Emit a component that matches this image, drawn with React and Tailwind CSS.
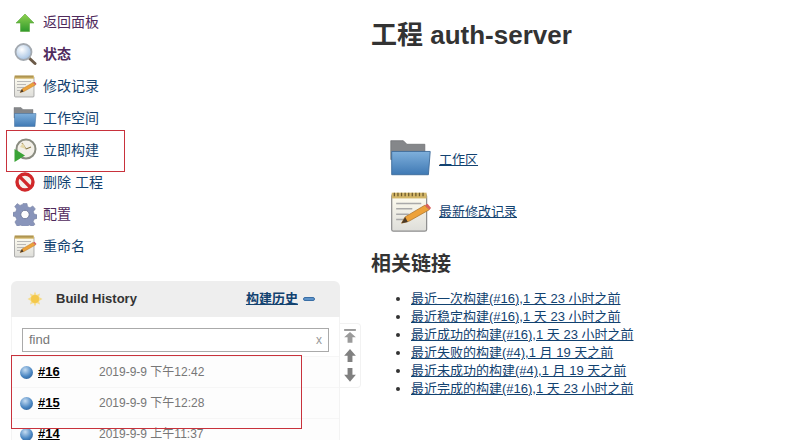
const FONT = "font-['Liberation_Sans','Noto_Sans_CJK_SC',sans-serif]";

function UpIcon() {
  return (
    <svg width="24" height="24" viewBox="0 0 24 24">
      <defs>
        <linearGradient id="upg" x1="0" y1="0" x2="0" y2="1">
          <stop offset="0" stopColor="#8fd14f" />
          <stop offset="1" stopColor="#2f9a2c" />
        </linearGradient>
      </defs>
      <path d="M12 4 L21 13 H16.500 V21.500 H7.500 V13 H3 Z" fill="url(#upg)" stroke="#5aa83a" strokeWidth="0.6" />
    </svg>
  );
}
function SearchIcon() {
  return (
    <svg width="24" height="24" viewBox="0 0 24 24">
      <defs>
        <radialGradient id="lens" cx="0.4" cy="0.35" r="0.7">
          <stop offset="0" stopColor="#ffffff" />
          <stop offset="1" stopColor="#9dbde0" />
        </radialGradient>
      </defs>
      <path d="M15 15 L22 21.500" stroke="#6b5a48" strokeWidth="3" strokeLinecap="round" />
      <circle cx="10.500" cy="10" r="8" fill="url(#lens)" stroke="#a3a9b0" strokeWidth="1.800" />
    </svg>
  );
}
function NotepadIcon({ s = 24, id }) {
  return (
    <svg width={s} height={s} viewBox="0 0 24 24">
      <defs>
        <linearGradient id={id} x1="0" y1="0" x2="0" y2="1">
          <stop offset="0" stopColor="#fffdf0" />
          <stop offset="1" stopColor="#dededa" />
        </linearGradient>
      </defs>
      <rect x="1.500" y="2.500" width="19.500" height="20.500" rx="1" fill={`url(#${id})`} stroke="#8f8f8f" strokeWidth="0.7" />
      <rect x="1.500" y="1.500" width="19.500" height="3.200" fill="#d3b668" />
      <path d="M3 1.500v2M5 1.500v2M7 1.500v2M9 1.500v2M11 1.500v2M13 1.500v2M15 1.500v2M17 1.500v2M19 1.500v2" stroke="#6c5a2d" strokeWidth="0.7" />
      <path d="M4 7.500h14M4 10.500h9M4 13.500h7M4 16.500h5" stroke="#a9a9a9" strokeWidth="0.8" />
      <path d="M7 18.500 L9 15 L20 8.500 L22.500 11 L11 17.500 Z" fill="#eda23a" stroke="#a86d22" strokeWidth="0.4" />
      <path d="M7 18.500 L9 15 L10.500 17.800 Z" fill="#4a3a28" />
      <path d="M20 8.500 L22.500 11 L23.500 10 L21.500 7.700 Z" fill="#d9605a" />
    </svg>
  );
}
function FolderIcon({ s = 24, id }) {
  return (
    <svg width={s} height={s} viewBox="0 0 24 24">
      <defs>
        <linearGradient id={id} x1="0" y1="0" x2="0" y2="1">
          <stop offset="0" stopColor="#7fb0dc" />
          <stop offset="1" stopColor="#3f79b4" />
        </linearGradient>
      </defs>
      <path d="M1 1.500 H8 L10 3.500 H20 V12 H1 Z" fill="#85878a" stroke="#6a6c6e" strokeWidth="0.4" />
      <path d="M1.500 20.500 L1.500 7.500 H23 L22 20.500 Z" fill={`url(#${id})`} stroke="#3c6a9a" strokeWidth="0.5" />
    </svg>
  );
}
function ClockIcon() {
  return (
    <svg width="24" height="24" viewBox="0 0 24 24">
      <circle cx="13" cy="11" r="9.500" fill="#f3f0e8" stroke="#8a8c80" strokeWidth="2" />
      <path d="M13 11 L9 5 M13 11 L18 9" stroke="#8a7a4a" strokeWidth="1.200" />
      <path d="M10 5 L13 11 L7 9 Z" fill="#e5d8a8" />
      <path d="M1.500 11 L12 17.500 L1.500 24 Z" fill="#3aa336" />
    </svg>
  );
}
function NoIcon() {
  return (
    <svg width="24" height="24" viewBox="0 0 24 24">
      <circle cx="12" cy="12" r="8" fill="#f5f1ec" stroke="#d1282a" strokeWidth="3.400" />
      <path d="M6.400 6.400 L17.600 17.600" stroke="#d1282a" strokeWidth="3.400" />
    </svg>
  );
}
function GearIcon() {
  return (
    <svg width="24" height="24" viewBox="0 0 24 24">
      <path d="M10 1.500h4l.6 3.200 2.400 1 2.800-1.800 2.600 3-2 2.500.7 2.600 3 .8v3.600l-3 .8-.9 2.500 1.800 2.600-2.800 2.600-2.600-1.800-2.400 1-.6 1.400h-3.400l-.6-1.400-2.500-1-2.600 1.800L1.900 20l1.800-2.600-1-2.500-2.700-.8v-3.600l2.800-.8.8-2.600-1.900-2.500 2.600-3 2.700 1.800 2.400-1z" fill="#8894ba" stroke="#737d9c" strokeWidth="0.5" />
      <circle cx="12" cy="12.500" r="4.200" fill="#fdfdfd" stroke="#5f6a8c" strokeWidth="0.8" />
    </svg>
  );
}
function SunIcon() {
  return (
    <svg width="16" height="16" viewBox="0 0 16 16">
      <path d="M8 .5 9.500 4 13 2.500 12 6l3.500 2-3.500 2 1 3.500L9.500 12 8 15.500 6.500 12 3 13.500 4 10 .5 8 4 6 3 2.500 6.500 4Z" fill="#f5dc8c" />
      <circle cx="8" cy="8" r="4" fill="#f4c84a" />
    </svg>
  );
}
function Ball() {
  return (
    <span className="block w-[13px] h-[13px] shrink-0 rounded-full bg-[radial-gradient(circle_at_40%_30%,#c5dcf2,#4a86c2_55%,#1f4f85)]" />
  );
}
function ArrowBtn({ kind }) {
  return (
    <svg width="12" height="14" viewBox="0 0 12 14">
      {kind === "first" && <rect x="0" y="0" width="12" height="2" fill="#9a9a9a" />}
      {kind === "down" ? (
        <path d="M3.500 0h5v7h3.500L6 14 0 7h3.500z" fill="#808080" />
      ) : (
        <path
          d={kind === "first" ? "M6 3l6 5.500H8.500V14h-5V8.500H0z" : "M6 0l6 7H8.500v7h-5V7H0z"}
          fill={kind === "first" ? "#9a9a9a" : "#808080"}
        />
      )}
    </svg>
  );
}

const side = [
  [<UpIcon />, "返回面板", "text-[#4f2a5c]", ""],
  [<SearchIcon />, "状态", "text-[#4f2a5c]", "font-bold"],
  [<NotepadIcon id="n1" />, "修改记录", "text-[#124270]", ""],
  [<FolderIcon id="f1" />, "工作空间", "text-[#124270]", ""],
  [<ClockIcon />, "立即构建", "text-[#124270]", ""],
  [<NoIcon />, "删除 工程", "text-[#124270]", ""],
  [<GearIcon />, "配置", "text-[#4f2a5c]", ""],
  [<NotepadIcon id="n2" />, "重命名", "text-[#124270]", ""],
];

const builds = [
  ["#16", "2019-9-9 下午12:42"],
  ["#15", "2019-9-9 下午12:28"],
  ["#14", "2019-9-9 上午11:37"],
];

const links = [
  "最近一次构建(#16),1 天 23 小时之前",
  "最近稳定构建(#16),1 天 23 小时之前",
  "最近成功的构建(#16),1 天 23 小时之前",
  "最近失败的构建(#4),1 月 19 天之前",
  "最近未成功的构建(#4),1 月 19 天之前",
  "最近完成的构建(#16),1 天 23 小时之前",
];

export default function App() {
  return (
    <div className={`relative flex w-[800px] h-[440px] overflow-hidden bg-white ${FONT}`}>
      <div className="w-[371px] shrink-0 pt-[6px]">
        <div className="flex flex-col pl-[13px]">
          {side.map(([icon, label, color, extra]) => (
            <div key={label} className="flex items-center h-8 gap-[6px]">
              <span className="w-6 h-6 shrink-0">{icon}</span>
              <span className={`text-[14px] leading-4 ${color} ${extra}`}>{label}</span>
            </div>
          ))}
        </div>
        <div className="flex items-start mt-[19px] ml-[11px]">
          <div className="w-[329px] shrink-0">
            <div className="flex items-center h-9 rounded-t-[6px] bg-[#eeeeee]">
              <span className="ml-[16px] w-4 h-4">
                <SunIcon />
              </span>
              <span className="ml-[13px] text-[13px] font-bold text-[#333333]">Build History</span>
              <span className="ml-[109px] text-[13px] font-bold text-[#124270] underline">构建历史</span>
              <span className="ml-[5px] w-[12px] h-[4px] rounded-sm bg-[#5d93c9] border border-[#3a6ea5]" />
            </div>
            <div className="border-x border-[#f3f3f3] pt-[11px]">
              <div className="flex items-center justify-between mx-[10px] h-6 px-[6px] border border-[#aaaaaa] bg-white text-[13px] text-[#777777]">
                <span>find</span>
                <span className="text-[12px] text-[#999999]">x</span>
              </div>
              <div className="flex flex-col mt-[4px]">
                {builds.map(([n, d]) => (
                  <div key={n} className="flex items-center h-[31px] pl-[8px] border-t border-[#f6f6f6] bg-[#fdfdfd]">
                    <Ball />
                    <a className="ml-[5px] w-[61px] text-[13px] font-bold text-black underline">{n}</a>
                    <span className="text-[12px] text-[#777777]">{d}</span>
                  </div>
                ))}
              </div>
            </div>
          </div>
          <div className="flex flex-col items-center gap-[6px] w-[21px] h-[65px] mt-[42px] py-[5px] rounded-r-[4px] border border-l-0 border-[#f2f2f2]">
            <ArrowBtn kind="first" />
            <ArrowBtn kind="up" />
            <ArrowBtn kind="down" />
          </div>
        </div>
      </div>

      <div className="flex-1 pt-[18px]">
        <h1 className="text-[26px] leading-[34px] font-bold text-[#333333]">工程 auth-server</h1>
        <div className="flex flex-col mt-[86px] ml-[18px] gap-[9px]">
          <div className="flex items-center gap-[7px]">
            <FolderIcon s={43} id="f2" />
            <a className="text-[13px] text-[#124270] underline">工作区</a>
          </div>
          <div className="flex items-center gap-[7px]">
            <NotepadIcon s={43} id="n3" />
            <a className="text-[13px] text-[#124270] underline">最新修改记录</a>
          </div>
        </div>
        <h2 className="mt-[18px] text-[20px] leading-[26px] font-bold text-[#333333]">相关链接</h2>
        <ul className="mt-[13px] ml-[40px] list-disc text-[13px] leading-[18px] text-[#124270]">
          {links.map((t) => (
            <li key={t} className="marker:text-[#333333]">
              <a className="underline">{t}</a>
            </li>
          ))}
        </ul>
      </div>

      <div className="absolute left-[6px] top-[130px] w-[119px] h-[42px] border border-[#c8323c]" />
      <div className="absolute left-[11px] top-[355px] w-[291px] h-[74px] border border-[#c8323c]" />
    </div>
  );
}
